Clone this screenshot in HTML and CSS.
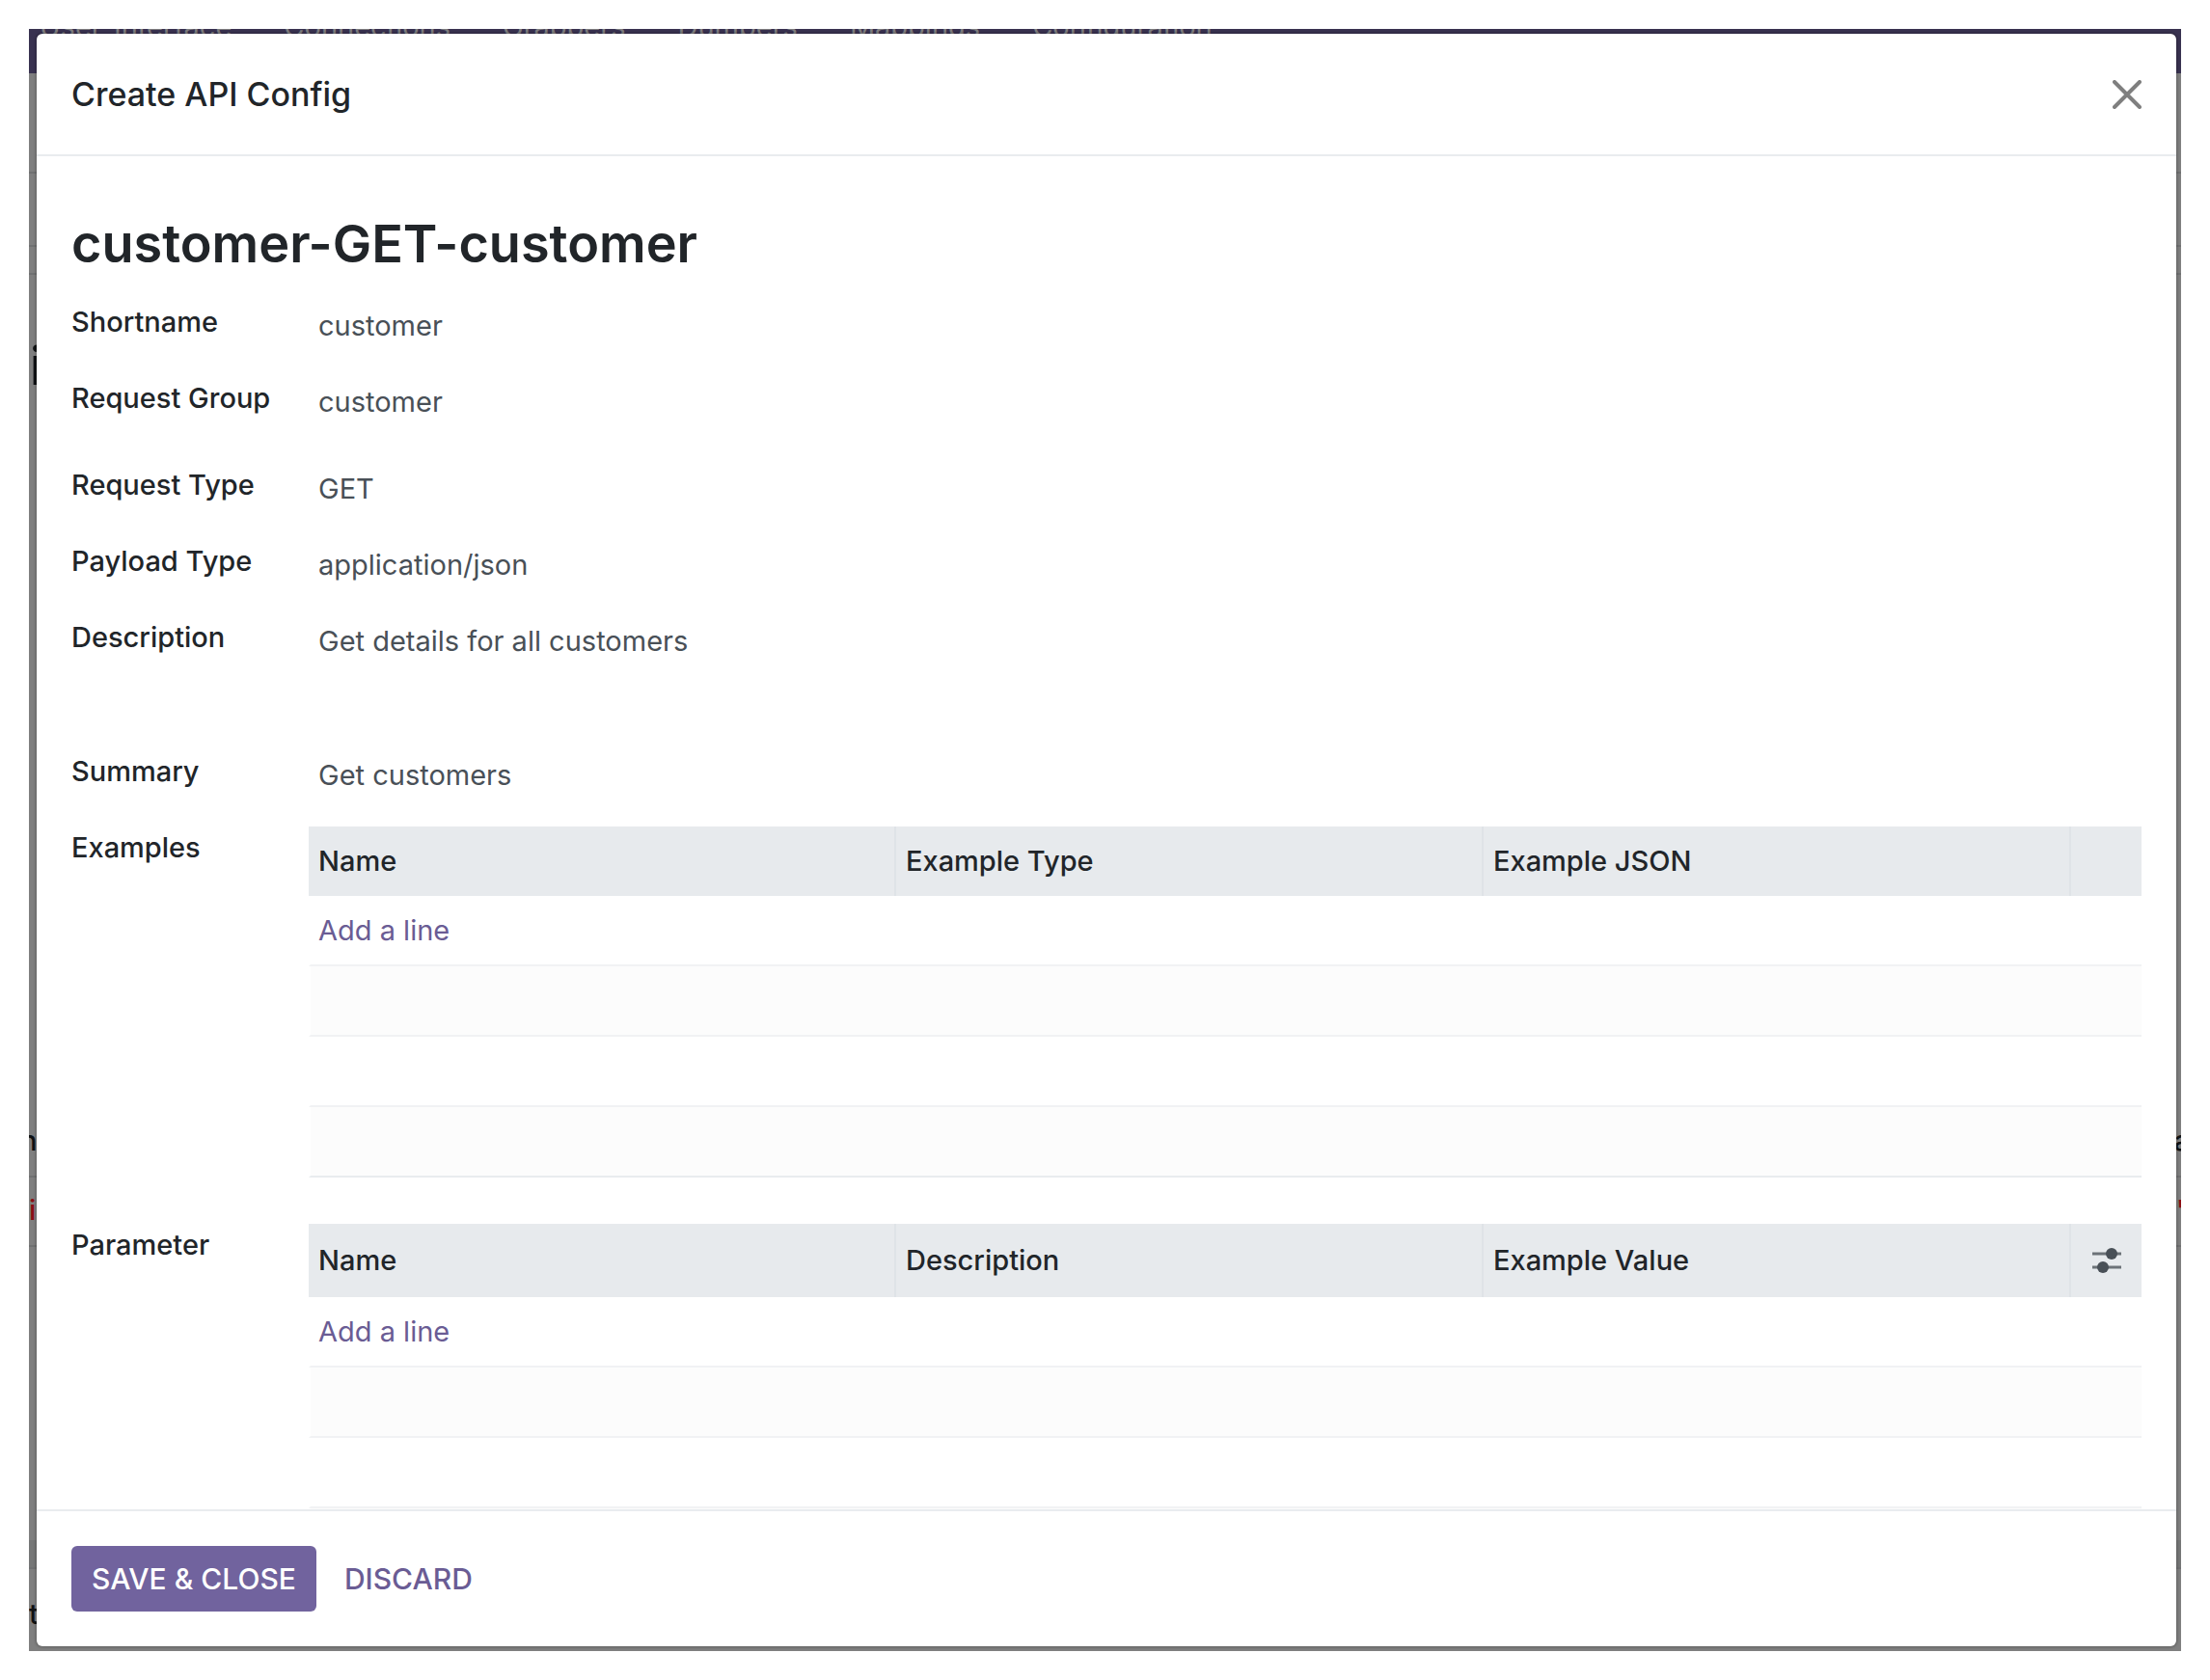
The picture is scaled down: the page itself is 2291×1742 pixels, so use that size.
FILE: index.html
```html
<!DOCTYPE html>
<html lang="en">
<head>
    <meta charset="UTF-8">
    <title>Create API Config</title>
    <meta name="viewport" content="width=device-width, initial-scale=1.0">
    <link rel="stylesheet" href="styles.css">
</head>
<body>

<div class="screen">
    <!-- page behind the dialog -->
    <div class="page" aria-hidden="true">
        <nav class="navbar">
            <span>User-Interface</span>
            <span>Connections</span>
            <span>Grabbers</span>
            <span>Dumpers</span>
            <span>Mappings</span>
            <span>Configuration</span>
        </nav>
        <div class="control-panel"></div>
        <div class="status-bar"></div>
        <div class="button-box"></div>
        <div class="sheet-title">i</div>
        <div class="list-row list-head"><span>n</span><span>a</span></div>
        <div class="list-row list-danger"><span>i</span><span>"</span></div>
        <div class="list-space"></div>
        <div class="list-foot"></div>
        <div class="chatter">t</div>
    </div>

    <div class="modal" role="dialog" aria-labelledby="modal-title">
        <header class="modal-header">
            <h4 class="modal-title" id="modal-title">Create API Config</h4>
            <button class="btn-close" type="button" aria-label="Close">
                <svg width="30" height="30" viewBox="0 0 30 30"><path d="M2 2L28 28M28 2L2 28" /></svg>
            </button>
        </header>

        <main class="modal-body">
            <h1>customer-GET-customer</h1>

            <div class="group">
                <div class="field">
                    <label for="shortname">Shortname</label>
                    <input id="shortname" type="text" value="customer">
                </div>
                <div class="field">
                    <label for="request-group">Request Group</label>
                    <input id="request-group" type="text" value="customer">
                </div>
            </div>

            <div class="group">
                <div class="field">
                    <label for="request-type">Request Type</label>
                    <select id="request-type"><option>GET</option></select>
                </div>
                <div class="field">
                    <label for="payload-type">Payload Type</label>
                    <select id="payload-type"><option>application/json</option></select>
                </div>
                <div class="field field-text">
                    <label for="description">Description</label>
                    <textarea id="description" rows="2">Get details for all customers</textarea>
                </div>
                <div class="field">
                    <label for="summary">Summary</label>
                    <input id="summary" type="text" value="Get customers">
                </div>

                <div class="field field-list">
                    <span class="label" id="examples">Examples</span>
                    <table class="list" aria-labelledby="examples">
                        <thead>
                            <tr><th>Name</th><th>Example Type</th><th>Example JSON</th><th class="optional"></th></tr>
                        </thead>
                        <tbody>
                            <tr><td colspan="4"><a href="#">Add a line</a></td></tr>
                            <tr><td colspan="4"></td></tr>
                            <tr><td colspan="4"></td></tr>
                            <tr><td colspan="4"></td></tr>
                        </tbody>
                    </table>
                </div>

                <div class="field field-list">
                    <span class="label" id="parameter">Parameter</span>
                    <table class="list" aria-labelledby="parameter">
                        <thead>
                            <tr>
                                <th>Name</th><th>Description</th><th>Example Value</th>
                                <th class="optional">
                                    <button class="btn-columns" type="button" aria-label="Optional columns">
                                        <svg width="30" height="26" viewBox="0 0 30 26">
                                            <path d="M0 6H30M0 20H30" />
                                            <circle cx="20" cy="6" r="6" />
                                            <circle cx="11" cy="20" r="6" />
                                        </svg>
                                    </button>
                                </th>
                            </tr>
                        </thead>
                        <tbody>
                            <tr><td colspan="4"><a href="#">Add a line</a></td></tr>
                            <tr><td colspan="4"></td></tr>
                            <tr><td colspan="4"></td></tr>
                            <tr><td colspan="4"></td></tr>
                        </tbody>
                    </table>
                </div>
            </div>
        </main>

        <footer class="modal-footer">
            <button class="btn btn-primary" type="button">SAVE &amp; CLOSE</button>
            <button class="btn btn-link" type="button">DISCARD</button>
        </footer>
    </div>
</div>

</body>
</html>
```

FILE: styles.css
```css
* { box-sizing: border-box; }
:root {
    --primary: #71639e;
    --link: #6a5c94;
    --text: #212529;
    --text-muted: #495057;
    --line: #e9ecef;
    --head: #e7eaed;
}
body {
    margin: 0;
    padding: 30px;
    height: 100vh;
    background: #fff;
    color: var(--text);
    font-family: Inter, "Liberation Sans", sans-serif;
    font-size: 29px;
    line-height: 40px;
}
.screen {
    position: relative;
    height: 100%;
    overflow: hidden;
    background: #7f7f7f;
}

/* page behind the dialog */
.page { color: #101214; }
.navbar {
    display: flex;
    align-items: center;
    gap: 54px;
    height: 96px;
    margin-top: -50px;
    padding-left: 11px;
    background: #393250;
    color: #807f80;
}
.control-panel, .status-bar, .button-box, .list-row {
    border-bottom: 2px solid #707172;
}
.control-panel { height: 104px; }
.status-bar { height: 76px; }
.button-box { height: 29px; }
.sheet-title {
    height: 878px;
    padding: 60px 0 0 1px;
    font-size: 54px;
    font-weight: 600;
    line-height: 70px;
}
.list-row {
    display: flex;
    justify-content: space-between;
    height: 72px;
    margin-right: -9px;
    font-weight: 500;
}
.list-head { height: 58px; }
.list-head span:first-child { margin-left: -9px; }
.list-danger { padding-top: 14px; color: #8c0f14; }
.list-space { height: 304px; }
.list-foot {
    height: 30px;
    background: #767777;
    border-bottom: 2px solid #707172;
}
.chatter { padding-top: 27px; font-weight: 500; }

/* dialog */
.modal {
    position: absolute;
    inset: 5px 5px 5px 8px;
    display: flex;
    flex-direction: column;
    overflow: hidden;
    border-radius: 6px;
    background: #fff;
    box-shadow: 0 0 3px 1px rgba(0, 0, 0, .25);
}
.modal-header {
    display: flex;
    align-items: center;
    justify-content: space-between;
    height: 127px;
    padding: 0 36px;
    border-bottom: 2px solid var(--line);
}
.modal-title {
    margin: 0;
    font-size: 34px;
    font-weight: 500;
}
.btn-close {
    display: flex;
    padding: 0;
    border: none;
    background: none;
}
.btn-close path {
    stroke: #7f7f7f;
    stroke-width: 4;
    stroke-linecap: round;
}

.modal-body {
    flex: 1;
    min-height: 0;
    overflow: hidden;
    padding: 56px 36px 0;
}
h1 {
    margin: 0 0 24px;
    font-size: 54px;
    font-weight: 600;
    line-height: 70px;
}
.group { margin-bottom: 11px; }
.field {
    display: grid;
    grid-template-columns: 246px 1fr;
    align-items: start;
    min-height: 79px;
}
.field-text { min-height: 139px; }
.field-list { margin-bottom: 48px; }
label, .label {
    padding-top: 2px;
    font-weight: 500;
}
input, select, textarea {
    display: block;
    width: 100%;
    margin: 0;
    padding: 6px 10px 0;
    border: none;
    outline: none;
    appearance: none;
    resize: none;
    overflow: hidden;
    background: none;
    color: var(--text-muted);
    font: inherit;
}

.list {
    width: 100%;
    table-layout: fixed;
    border-collapse: separate;
    border-spacing: 0;
}
.list th {
    height: 72px;
    padding: 0 10px;
    border-right: 2px solid #dfe3e7;
    background: var(--head);
    font-weight: 500;
    text-align: left;
}
.list th.optional {
    width: 73px;
    border-right: none;
}
.list td {
    height: 73px;
    padding: 0 8px;
    border-left: 2px solid #fff;
    border-bottom: 2px solid #f1f2f4;
}
.list tbody tr:nth-child(even) td { background: #fcfcfc; }
.list tbody tr:last-child td { border-bottom-color: var(--line); }
.list a {
    color: var(--link);
    text-decoration: none;
}
.btn-columns {
    display: flex;
    align-items: center;
    justify-content: center;
    width: 100%;
    height: 76px;
    padding: 0;
    border: none;
    background: none;
}
.btn-columns path {
    stroke: #6c7278;
    stroke-width: 3;
}
.btn-columns circle { fill: #495057; }

.modal-footer {
    display: flex;
    align-items: center;
    gap: 8px;
    height: 142px;
    padding: 0 36px;
    border-top: 2px solid var(--line);
}
.btn {
    height: 68px;
    padding: 0 21px;
    border: none;
    border-radius: 6px;
    background: none;
    font: inherit;
    font-size: 30px;
    font-weight: 500;
}
.btn-primary {
    background: var(--primary);
    color: #fff;
}
.btn-link { color: var(--link); }
```
